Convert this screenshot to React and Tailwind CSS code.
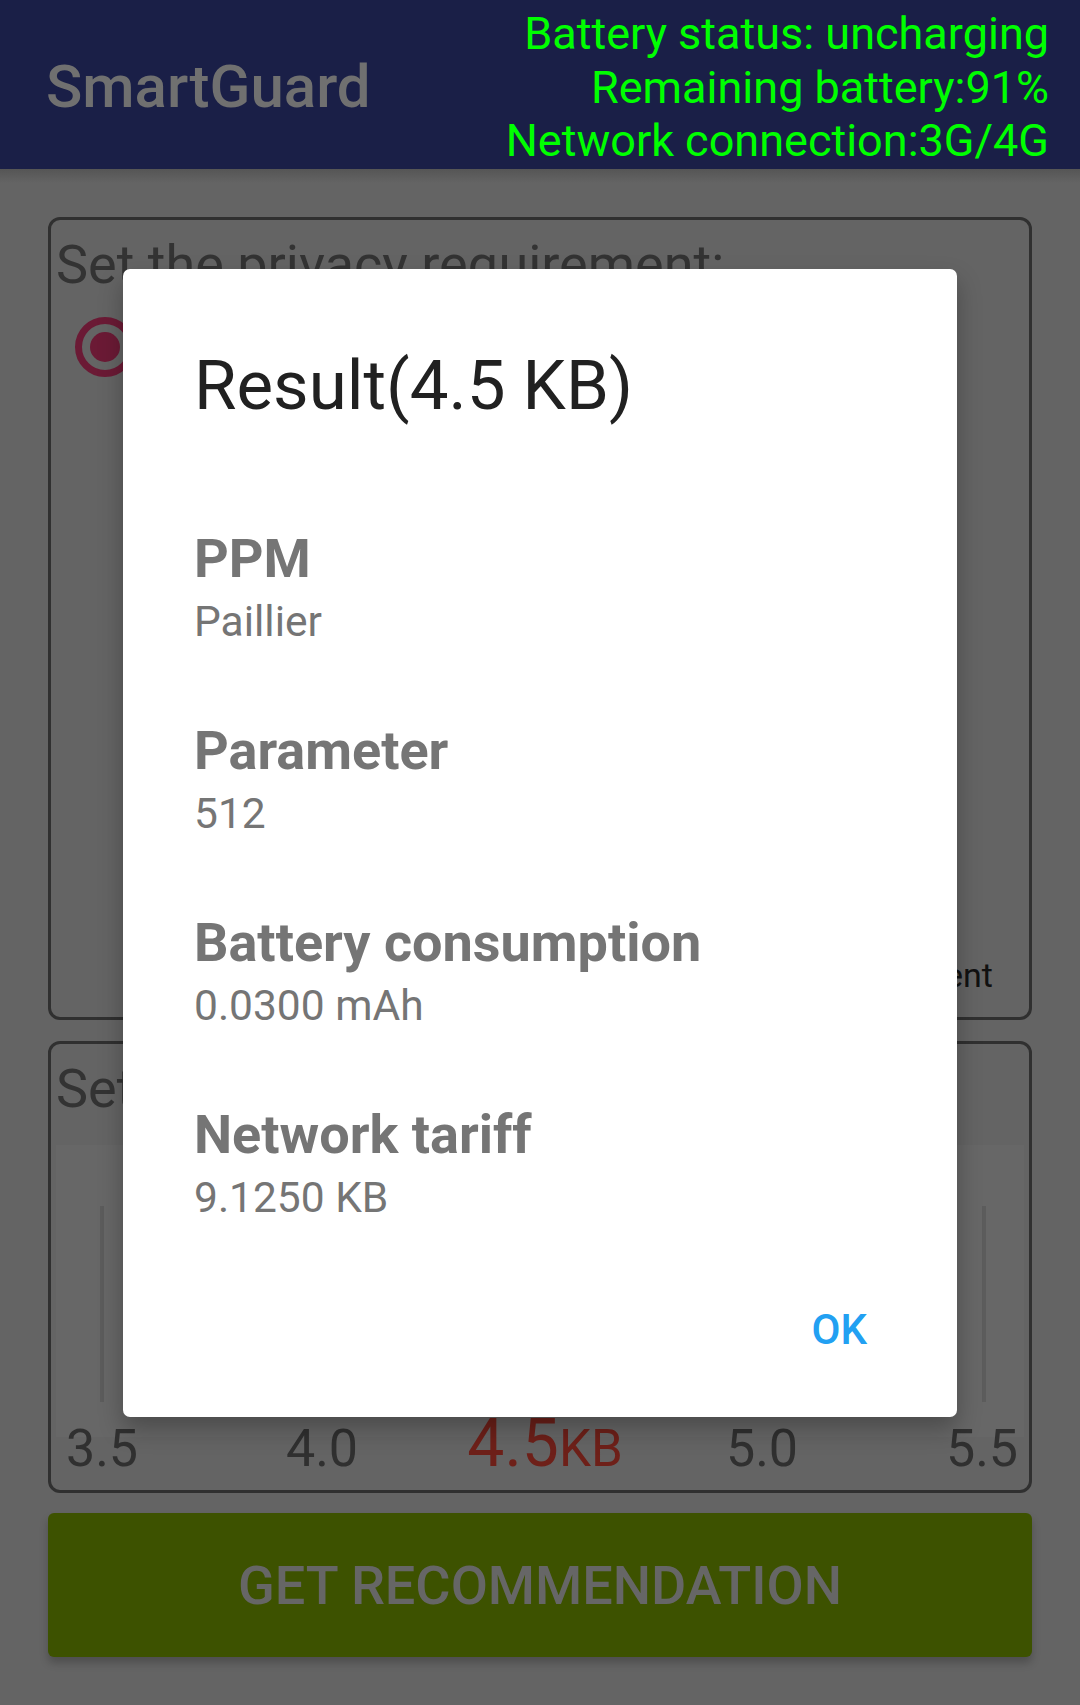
import React from "react";

const rows = [
  { title: "PPM", value: "Paillier" },
  { title: "Parameter", value: "512" },
  { title: "Battery consumption", value: "0.0300 mAh" },
  { title: "Network tariff", value: "9.1250 KB" },
];

const ResultDialog = () => (
  <div className="absolute left-[123px] top-[269px] w-[834px] bg-white rounded-[7px] shadow-[0_12px_24px_rgba(0,0,0,0.28)] pl-[71px] pr-[90px] pt-[77px] pb-[62px]">
    <h2 className="text-[69px] leading-[80px] text-[#212121]">Result(4.5 KB)</h2>
    <div className="mt-[103px] flex flex-col gap-[74px]">
      {rows.map((r) => (
        <div key={r.title}>
          <div className="text-[54px] leading-[60px] font-bold text-[#757575]">{r.title}</div>
          <div className="mt-[8px] text-[42.5px] leading-[50px] text-[#757575]">{r.value}</div>
        </div>
      ))}
    </div>
    <div className="mt-[82px] flex justify-end">
      <span className="text-[42px] leading-[50px] font-medium text-[#22a0f2]">OK</span>
    </div>
  </div>
);

export default function App() {
  const scale = ["3.5", "4.0", null, "5.0", "5.5"];

  return (
    <div className="relative w-[1080px] h-[1705px] overflow-hidden bg-[#646464] font-['Roboto',sans-serif]">
      {/* app bar */}
      <header className="h-[169px] bg-[#1a1f47] flex justify-between items-start">
        <div className="pl-[46px] pt-[52px] text-[60px] leading-[70px] font-medium text-[#707070]">
          SmartGuard
        </div>
        <div className="pr-[31px] pt-[7px] text-right text-[45px] leading-[53.5px] text-[#00ff00]">
          <div>Battery status: uncharging</div>
          <div>Remaining battery:91%</div>
          <div>Network connection:3G/4G</div>
        </div>
      </header>
      <div className="h-[14px] bg-gradient-to-b from-[#555555] to-[#646464]" />

      <main className="px-[48px] pt-[34px] flex flex-col">
        {/* privacy card */}
        <section className="h-[803px] border-[3px] border-[#303030] rounded-[12px] px-[5px] pt-[15px] flex flex-col">
          <div className="text-[54px] leading-[60px] text-[#333333]">Set the privacy requirement:</div>
          <div className="mt-[22px] ml-[19px] w-[60px] h-[60px] rounded-full border-[7px] border-[#6b1a35] flex items-center justify-center">
            <div className="w-[30px] h-[30px] rounded-full bg-[#6b1a35]" />
          </div>
          <div className="mt-auto pb-[22px] pr-[31px] text-right text-[34px] leading-[40px] text-[#111111]">
            Custom requirement
          </div>
        </section>

        {/* size card */}
        <section className="mt-[21px] h-[452px] border-[3px] border-[#303030] rounded-[12px] px-[5px] pt-[15px] flex flex-col">
          <div className="text-[54px] leading-[60px] text-[#333333]">Set the data size:</div>
          <div className="mt-[26px] h-[292px] bg-[#676767] pl-[44px] pr-[38px] pt-[61px] flex justify-between items-start">
            {[0, 1, 2, 3, 4].map((i) => (
              <div key={i} className="w-[4px] h-[196px] bg-[#5c5c5c]" />
            ))}
          </div>
          <div className="-mt-[23px] -ml-[64px] w-[1100px] grid grid-cols-5 items-baseline text-[52px] leading-[60px] text-[#303030]">
            {scale.map((s, i) =>
              s ? (
                <div key={i} className="text-center">{s}</div>
              ) : (
                <div key={i} className="pl-[6px] text-center text-[#6e2019]">
                  <span className="text-[66px]">4.5</span>
                  <span className="text-[51px]">KB</span>
                </div>
              )
            )}
          </div>
        </section>

        <button className="mt-[20px] h-[144px] rounded-[6px] bg-[#3d5200] shadow-[0_6px_8px_rgba(0,0,0,0.22)] flex items-center justify-center text-[54px] font-medium text-[#666666]">
          GET RECOMMENDATION
        </button>
      </main>

      <ResultDialog />
    </div>
  );
}
